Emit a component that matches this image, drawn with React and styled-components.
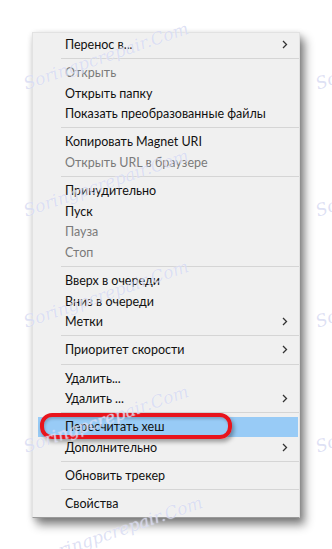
import React from "react";
import styled, { createGlobalStyle } from "styled-components";

const GlobalStyle = createGlobalStyle`
  html, body {
    margin: 0;
    padding: 0;
    background: #ffffff;
  }
  body {
    font-family: "Lato", "Noto Sans", sans-serif;
  }
`;

const Page = styled.div`
  position: relative;
  width: 332px;
  height: 549px;
  overflow: hidden;
  padding: 32px 0 0 32px;
  box-sizing: border-box;
`;

const Menu = styled.div`
  position: relative;
  width: 268px;
  display: flex;
  flex-direction: column;
  padding: 1px 0 3px;
  background: #f0f0f0;
  border: 1px solid #e2e2e2;
  border-bottom-color: #9a9a9a;
  box-sizing: border-box;
  box-shadow: 5px 7px 9px rgba(0, 0, 0, 0.45), 1px 2px 6px rgba(0, 0, 0, 0.18);
`;

const Item = styled.div`
  position: relative;
  height: 20.6px;
  display: flex;
  align-items: center;
  justify-content: space-between;
  margin: 0 1px 0 5px;
  padding: 0 10px 0 27px;
  font-size: 12.5px;
  color: ${(p) => (p.$disabled ? "#7a7a7a" : "#111111")};
  background: ${(p) => (p.$active ? "#98cbf6" : "transparent")};
  white-space: nowrap;
`;

const Separator = styled.div`
  height: 1px;
  margin: 3.3px 0 3.3px 28px;
  background: #d5d5d5;
`;

const Ring = styled.div`
  position: absolute;
  left: 2px;
  top: -4px;
  width: 184px;
  height: 18px;
  border: 4px solid #e8141c;
  border-radius: 12px;
  box-shadow: 2px 3px 4px rgba(0, 0, 0, 0.35), inset 1px 2px 3px rgba(0, 0, 0, 0.2);
  pointer-events: none;
`;

const Watermark = styled.div`
  position: absolute;
  left: ${(p) => p.$x}px;
  top: ${(p) => p.$y}px;
  transform: rotate(-19deg);
  transform-origin: left center;
  font-family: "DejaVu Serif", serif;
  font-style: italic;
  font-size: 17px;
  color: rgba(175, 182, 230, 0.42);
  text-shadow: 0 0 1px rgba(255, 255, 255, 0.9);
  white-space: nowrap;
  pointer-events: none;
  z-index: 2;
`;

const Chevron = () => (
  <svg width="6" height="9" viewBox="0 0 6 9">
    <path d="M1 1 L4.5 4.5 L1 8" fill="none" stroke="#333" strokeWidth="1.3" />
  </svg>
);

const groups = [
  [{ label: "Перенос в...", sub: true }],
  [
    { label: "Открыть", disabled: true },
    { label: "Открыть папку" },
    { label: "Показать преобразованные файлы" },
  ],
  [
    { label: "Копировать Magnet URI" },
    { label: "Открыть URL в браузере", disabled: true },
  ],
  [
    { label: "Принудительно" },
    { label: "Пуск" },
    { label: "Пауза", disabled: true },
    { label: "Стоп", disabled: true },
  ],
  [
    { label: "Вверх в очереди" },
    { label: "Вниз в очереди" },
    { label: "Метки", sub: true },
  ],
  [{ label: "Приоритет скорости", sub: true }],
  [{ label: "Удалить..." }, { label: "Удалить ...", sub: true }],
  [
    { label: "Пересчитать хеш", active: true },
    { label: "Дополнительно", sub: true },
  ],
  [{ label: "Обновить трекер" }],
  [{ label: "Свойства" }],
];

const marks = [
  { x: 24, y: 74 },
  { x: 24, y: 201 },
  { x: 24, y: 312 },
  { x: 24, y: 437 },
  { x: 38, y: 548 },
  { x: 316, y: 74 },
  { x: 316, y: 201 },
  { x: 316, y: 312 },
  { x: 316, y: 437 },
];

function App() {
  return (
    <Page>
      <GlobalStyle />
      <Menu>
        {groups.map((group, gi) => (
          <React.Fragment key={gi}>
            {gi > 0 && <Separator />}
            {group.map((item) => (
              <Item key={item.label} $disabled={item.disabled} $active={item.active}>
                <span>{item.label}</span>
                {item.sub && <Chevron />}
                {item.active && <Ring />}
              </Item>
            ))}
          </React.Fragment>
        ))}
      </Menu>
      {marks.map((m, i) => (
        <Watermark key={i} $x={m.x} $y={m.y}>
          Soringpcrepair.Com
        </Watermark>
      ))}
    </Page>
  );
}

export default App;
